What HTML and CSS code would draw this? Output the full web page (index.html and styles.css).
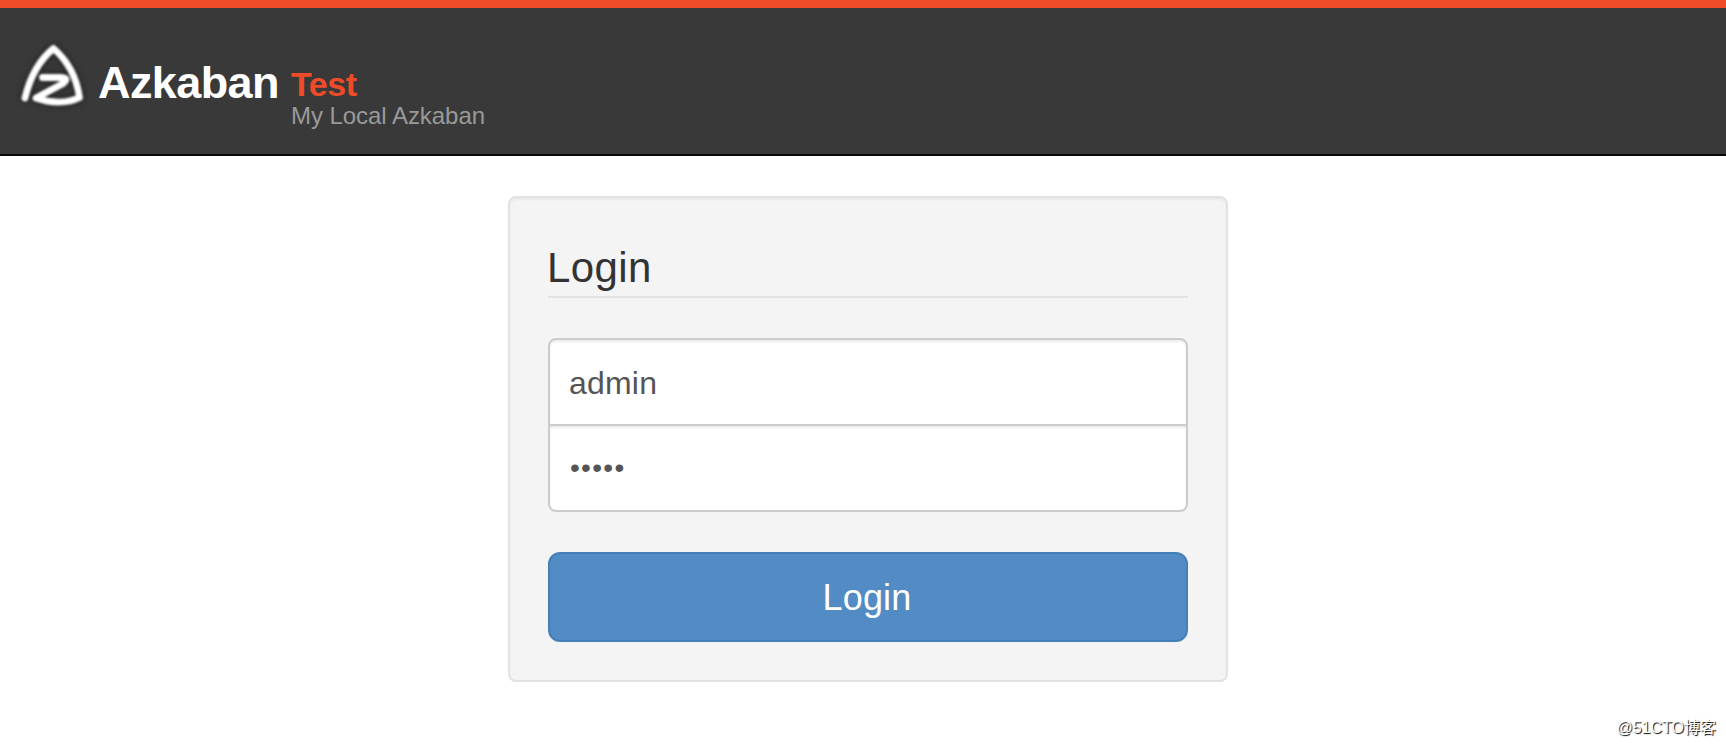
FILE: index.html
```html
<!DOCTYPE html>
<html>

<head>
    <meta charset="UTF-8">
    <title>Azkaban</title>
    <link rel="stylesheet" href="styles.css">
</head>

<body>

<div class="navbar">
    <a href="#" class="logo">
        <svg width="85" height="80" viewBox="0 0 85 80">
            <path d="M15 63C19 46 27 27 43.500 13.500C59 27 67 45 69.500 62.500C58 68.500 41 68.500 26 63L53 48.500Q60 43 51 42.500L32.500 42.500"/>
        </svg>
    </a>
    <h1>Azkaban</h1>
    <div class="info">
        <h2>Test</h2>
        <p>My Local Azkaban</p>
    </div>
</div>

<form class="login" onsubmit="return false">
    <h3>Login</h3>
    <input type="text" class="username" value="admin">
    <input type="password" class="password" value="admin">
    <button type="button" class="btn">Login</button>
</form>

<div class="watermark">@51CTO博客</div>

</body>

</html>
```

FILE: styles.css
```css
* {
    margin: 0;
    padding: 0;
    box-sizing: border-box;
}
body {
    height: 746px;
    overflow: hidden;
    background: #fff;
    font-family: "Liberation Sans", "Noto Sans CJK SC", sans-serif;
    color: #333;
}
.navbar {
    display: flex;
    align-items: flex-start;
    height: 156px;
    border-top: 8px solid #ef4b28;
    border-bottom: 2px solid #070707;
    background: #393939;
}
.logo {
    margin: 27px 3px 0 10px;
    height: 80px;
}
.logo path {
    fill: none;
    stroke: #fff;
    stroke-width: 6.8;
    stroke-linecap: round;
    stroke-linejoin: round;
}
.logo svg {
    filter: blur(0.9px) drop-shadow(0 0 3px rgba(0, 0, 0, .6));
}
.navbar h1 {
    margin-top: 50px;
    width: 193px;
    font-size: 45px;
    line-height: 50px;
    letter-spacing: -0.6px;
    color: #fff;
}
.info h2 {
    margin-top: 58px;
    font-size: 34px;
    line-height: 36px;
    letter-spacing: -0.4px;
    color: #ef4b28;
}
.info p {
    margin-top: 1px;
    font-size: 24px;
    line-height: 26px;
    letter-spacing: -0.05px;
    color: #999;
}
.login {
    margin: 40px 0 0 508px;
    padding: 38px;
    width: 720px;
    height: 486px;
    border: 2px solid #e2e2e2;
    border-radius: 8px;
    background: #f4f4f4;
    box-shadow: inset 0 2px 2px rgba(0, 0, 0, .05);
}
.login h3 {
    margin-bottom: 40px;
    height: 62px;
    border-bottom: 2px solid #e3e3e3;
    font-size: 42px;
    font-weight: normal;
    line-height: 64px;
    text-indent: -1px;
    letter-spacing: 0.4px;
}
.login input {
    display: block;
    width: 640px;
    height: 88px;
    padding: 2px 19px 0;
    border: 2px solid #ccc;
    background: #fff;
    box-shadow: inset 0 2px 2px rgba(0, 0, 0, .075);
    font-family: inherit;
    font-size: 32px;
    letter-spacing: 0.2px;
    color: #555;
    outline: none;
}
.login .username {
    border-radius: 8px 8px 0 0;
}
.login .password {
    margin-top: -2px;
    padding: 0 20px;
    border-radius: 0 0 8px 8px;
    font-size: 28px;
    letter-spacing: 1.3px;
}
.btn {
    display: block;
    margin-top: 40px;
    padding: 2px 2px 0 0;
    width: 640px;
    height: 90px;
    border: 2px solid #457fba;
    border-radius: 12px;
    background: #538cc5;
    font-family: inherit;
    font-size: 36px;
    letter-spacing: 0.2px;
    color: #fff;
}
.watermark {
    position: absolute;
    right: 10px;
    bottom: 6px;
    font-size: 16px;
    line-height: 24px;
    color: #fff;
    text-shadow: 1px 1px 1px #000;
}
```
